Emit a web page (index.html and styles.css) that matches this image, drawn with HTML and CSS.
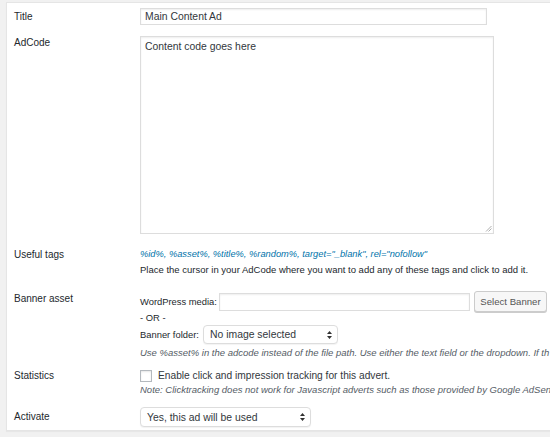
FILE: index.html
```html
<!DOCTYPE html>
<html>
<head>
<meta charset="utf-8">
<link rel="stylesheet" href="styles.css">
</head>
<body>
<div class="panel">
  <div class="row r-title">
    <div class="label lh17">Title</div>
    <div class="field"><div class="input title-input">Main Content Ad</div></div>
  </div>
  <div class="row r-code">
    <div class="label lh13">AdCode</div>
    <div class="field">
      <div class="textarea">Content code goes here
        <svg class="grip" width="7" height="7" viewBox="0 0 7 7"><path d="M1 6.5 L6.5 1 M3.5 6.5 L6.5 3.5" stroke="#999" stroke-width="0.8"/></svg>
      </div>
    </div>
  </div>
  <div class="row r-tags">
    <div class="label lh15">Useful tags</div>
    <div class="field desc">
      <div class="tags">%id%, %asset%, %title%, %random%, target="_blank", rel="nofollow"</div>
      <div class="line">Place the cursor in your AdCode where you want to add any of these tags and click to add it.</div>
    </div>
  </div>
  <div class="row r-banner">
    <div class="label lh15">Banner asset</div>
    <div class="field desc">
      <div class="media">
        <span class="small">WordPress media:</span>
        <div class="input media-input"></div>
        <div class="button">Select Banner</div>
      </div>
      <div class="or">- OR -</div>
      <div class="folder">
        <span class="small">Banner folder:</span>
        <div class="select folder-select"><span>No image selected</span>
          <svg width="5" height="8" viewBox="0 0 5 8"><path d="M2.5 0 L5 3 L0 3 Z M2.5 8 L5 5 L0 5 Z" fill="#333"/></svg>
        </div>
      </div>
      <div class="note">Use %asset% in the adcode instead of the file path. Use either the text field or the dropdown. If th</div>
    </div>
  </div>
  <div class="row r-stats">
    <div class="label lh15">Statistics</div>
    <div class="field desc">
      <div class="check-line"><span class="checkbox"></span><span class="check-text">Enable click and impression tracking for this advert.</span></div>
      <div class="note">Note: Clicktracking does not work for Javascript adverts such as those provided by Google AdSen</div>
    </div>
  </div>
  <div class="row r-activate">
    <div class="label lh20">Activate</div>
    <div class="field">
      <div class="select activate-select"><span>Yes, this ad will be used</span>
        <svg width="5" height="8" viewBox="0 0 5 8"><path d="M2.5 0 L5 3 L0 3 Z M2.5 8 L5 5 L0 5 Z" fill="#333"/></svg>
      </div>
    </div>
  </div>
</div>
</body>
</html>
```
FILE: styles.css
```css
html, body {
  margin: 0;
  padding: 0;
  background: #f1f1f1;
  overflow: hidden;
  width: 550px;
  height: 437px;
}
body {
  font-family: "Liberation Sans", Arial, Helvetica, sans-serif;
  color: #23282d;
}
.panel {
  margin: 2px 0 0 6px;
  background: #fff;
  border: 1px solid #e5e5e5;
  border-right: none;
  box-shadow: 0 1px 1px rgba(0,0,0,0.04);
  padding-bottom: 3px;
  overflow: hidden;
}
.row {
  display: flex;
  align-items: flex-start;
}
.label {
  width: 133px;
  flex: none;
  box-sizing: border-box;
  padding-left: 7px;
  font-size: 10px;
  color: #23282d;
}
.lh13 { line-height: 13px; }
.lh15 { line-height: 15px; }
.lh17 { line-height: 17px; }
.lh20 { line-height: 20px; }
.field {
  flex: 1;
  min-width: 0;
}
.desc {
  font-size: 9.5px;
  color: #23282d;
}
.r-title { margin-top: 5px; }
.r-code { margin-top: 11px; }
.r-tags { margin-top: 13px; }
.r-banner { margin-top: 14px; }
.r-stats { margin-top: 8px; }
.r-activate { margin-top: 10px; }

.input {
  box-sizing: border-box;
  border: 1px solid #ddd;
  box-shadow: inset 0 1px 2px rgba(0,0,0,0.07);
  background: #fff;
  font-size: 10.4px;
  color: #32373c;
}
.title-input {
  width: 347px;
  height: 17px;
  line-height: 15px;
  padding-left: 4px;
}
.textarea {
  position: relative;
  box-sizing: border-box;
  width: 354px;
  height: 198px;
  border: 1px solid #ddd;
  box-shadow: inset 0 1px 2px rgba(0,0,0,0.07);
  font-size: 10.4px;
  color: #32373c;
  padding: 3px 4px;
  line-height: 13px;
}
.grip {
  position: absolute;
  right: 1px;
  bottom: 1px;
}
.tags {
  line-height: 15px;
  color: #0073aa;
  font-style: italic;
  font-size: 9.3px;
}
.line { line-height: 15px; }
.media {
  display: flex;
  align-items: center;
  height: 21px;
}
.small { font-size: 9.4px; }
.media .small { width: 79px; flex: none; }
.media-input {
  width: 251px;
  height: 18px;
  flex: none;
}
.button {
  margin-left: 4px;
  box-sizing: border-box;
  width: 73px;
  height: 21px;
  flex: none;
  border: 1px solid #ccc;
  border-radius: 3px;
  background: #f7f7f7;
  box-shadow: 0 1px 0 #ccc;
  font-size: 9.6px;
  color: #555;
  text-align: center;
  line-height: 19px;
}
.or {
  line-height: 11px;
  font-size: 9.4px;
}
.folder {
  margin-top: 2px;
  display: flex;
  align-items: center;
  height: 19px;
}
.folder .small { width: 63px; flex: none; }
.select {
  box-sizing: border-box;
  display: flex;
  align-items: center;
  justify-content: space-between;
  border: 1px solid #ddd;
  border-radius: 4px;
  background: #fff;
  box-shadow: 0 1px 1px rgba(0,0,0,0.05);
  padding: 0 5px 0 6px;
  font-size: 10.4px;
  color: #32373c;
  flex: none;
}
.folder-select { width: 135px; height: 19px; }
.activate-select { width: 171px; height: 20px; }
.note {
  margin-top: 2px;
  line-height: 14px;
  font-style: italic;
  color: #555d66;
  white-space: nowrap;
  overflow: hidden;
}
.check-line {
  display: flex;
  align-items: center;
  height: 15px;
}
.check-text {
  font-size: 10.2px;
  color: #32373c;
}
.checkbox {
  box-sizing: border-box;
  width: 12px;
  height: 12px;
  border: 1px solid #b4b9be;
  box-shadow: inset 0 1px 2px rgba(0,0,0,0.1);
  background: #fff;
  margin-right: 6px;
  flex: none;
}
.r-stats .note { margin-top: 0; }
```
